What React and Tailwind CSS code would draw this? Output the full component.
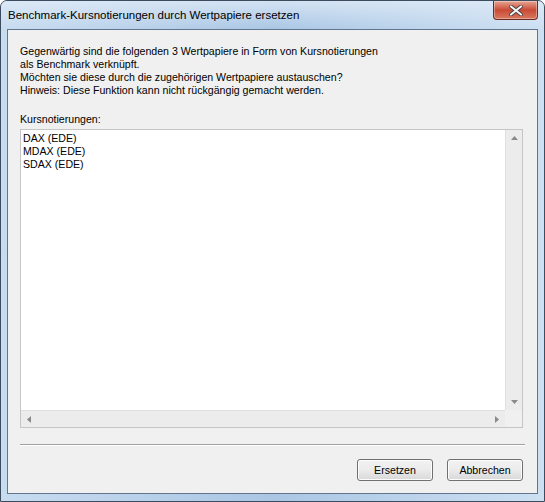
export default function App() {
  const font = { fontFamily: '"Liberation Sans", Arial, sans-serif' };
  return (
    <div className="w-[545px] h-[502px] bg-white">
      <div className="relative w-[545px] h-[502px] rounded-t-[7px] border border-[#3c4b5e] bg-gradient-to-r from-[#c8dcf0] via-[#aac6e4] to-[#cde0f2] flex flex-col overflow-hidden">
        <div className="flex justify-between items-start h-[28px] shrink-0 bg-gradient-to-b from-[#e4eef9]/70 to-transparent">
          <div className="pl-[7px] pt-[7px] text-[11.5px] leading-[14px] text-black" style={font}>
            Benchmark-Kursnotierungen durch Wertpapiere ersetzen
          </div>
          <div className="mr-[6px] w-[45px] h-[19px] rounded-b-[4px] border border-t-0 border-[#6d2a22] bg-gradient-to-b from-[#e5a594] via-[#c94a35] to-[#d8775f] flex items-center justify-center shadow-[inset_0_0_0_1px_rgba(255,255,255,0.35)]">
            <svg width="14" height="11" viewBox="0 0 14 11">
              <path d="M2 1.5 L12 9.5 M12 1.5 L2 9.5" stroke="#3b3b3b" strokeWidth="3.6" strokeLinecap="round" />
              <path d="M2 1.5 L12 9.5 M12 1.5 L2 9.5" stroke="#f4f4f4" strokeWidth="2.2" strokeLinecap="round" />
            </svg>
          </div>
        </div>
        <div className="mx-[6px] mb-[7px] flex-1 border border-[#61768e] bg-[#f0f0f0] flex flex-col text-[10.6px] leading-[13px] text-black" style={font}>
          <div className="pl-[12px] pt-[15px]">
            <div>Gegenwärtig sind die folgenden 3 Wertpapiere in Form von Kursnotierungen</div>
            <div>als Benchmark verknüpft.</div>
            <div>Möchten sie diese durch die zugehörigen Wertpapiere austauschen?</div>
            <div>Hinweis: Diese Funktion kann nicht rückgängig gemacht werden.</div>
            <div className="mt-[16px]">Kursnotierungen:</div>
          </div>
          <div className="ml-[12px] mt-[3px] w-[503px] h-[299px] border border-[#c5c5c5] bg-white flex flex-col">
            <div className="flex flex-1 min-h-0">
              <div className="flex-1 pl-[2px] pt-[2px]">
                <div>DAX (EDE)</div>
                <div>MDAX (EDE)</div>
                <div>SDAX (EDE)</div>
              </div>
              <div className="w-[17px] bg-[#ececec] border-l border-[#e0e0e0] flex flex-col justify-between items-center py-[6px]">
                <svg width="7" height="4" viewBox="0 0 7 4"><path d="M0 4 L3.5 0 L7 4 Z" fill="#8a8a8a" /></svg>
                <svg width="7" height="4" viewBox="0 0 7 4"><path d="M0 0 L3.5 4 L7 0 Z" fill="#8a8a8a" /></svg>
              </div>
            </div>
            <div className="flex h-[17px] shrink-0">
              <div className="flex-1 bg-[#ececec] border-t border-[#e0e0e0] flex justify-between items-center px-[6px]">
                <svg width="4" height="7" viewBox="0 0 4 7"><path d="M4 0 L0 3.5 L4 7 Z" fill="#8a8a8a" /></svg>
                <svg width="4" height="7" viewBox="0 0 4 7"><path d="M0 0 L4 3.5 L0 7 Z" fill="#8a8a8a" /></svg>
              </div>
              <div className="w-[17px] bg-[#f0f0f0]" />
            </div>
          </div>
          <div className="ml-[12px] mt-[16px] w-[505px] h-[2px] border-t border-[#a0a0a0] border-b border-b-white" />
          <div className="flex justify-end gap-[14px] mt-[13px] pr-[14px]">
            <button className="w-[76px] h-[22px] rounded-[3px] border border-[#707070] bg-gradient-to-b from-[#f2f2f2] via-[#ebebeb] to-[#d8d8d8] shadow-[inset_0_0_0_1px_#fcfcfc] text-[10.6px] leading-[13px]" style={font}>Ersetzen</button>
            <button className="w-[76px] h-[22px] rounded-[3px] border border-[#707070] bg-gradient-to-b from-[#f2f2f2] via-[#ebebeb] to-[#d8d8d8] shadow-[inset_0_0_0_1px_#fcfcfc] text-[10.6px] leading-[13px]" style={font}>Abbrechen</button>
          </div>
        </div>
      </div>
    </div>
  );
}
